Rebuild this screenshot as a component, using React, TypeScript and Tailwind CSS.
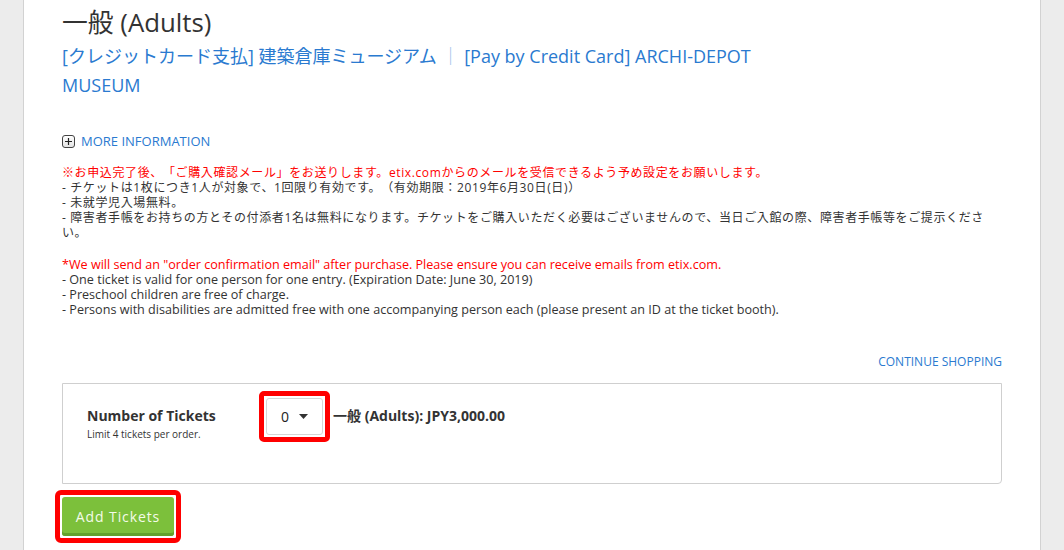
import React from "react";

const font = "font-['Open_Sans','Noto_Sans_CJK_JP',sans-serif]";

function PlusIcon() {
  return (
    <span className="inline-flex h-[13px] w-[13px] items-center justify-center rounded-[3px] border border-[#444] bg-gradient-to-b from-white to-[#e4e4e4]">
      <svg width="9" height="9" viewBox="0 0 9 9">
        <path d="M4.5 1v7M1 4.5h7" stroke="#222" strokeWidth="1.2" />
      </svg>
    </span>
  );
}

export default function App() {
  return (
    <div className={`min-h-[550px] w-[1064px] bg-[#ececec] ${font} [text-spacing-trim:space-all]`}>
      <div className="ml-[23px] min-h-[550px] w-[1018px] border-x border-[#d2d2d2] bg-white px-[38px]">
        <h1 className="pt-[7px] text-[25.8px] leading-[30px] text-[#333]">一般 (Adults)</h1>
        <div className="mt-[5px] w-[730px] text-[18px] leading-[29px] text-[#2a7ad0]">
          [クレジットカード支払] 建築倉庫ミュージアム <span className="text-[#9cc0ea]">｜</span> [Pay by Credit Card] ARCHI-DEPOT MUSEUM
        </div>
        <div className="mt-[33px] flex items-center gap-[6px] text-[13px] leading-[16px] text-[#2a7ad0]">
          <PlusIcon />
          <span>MORE INFORMATION</span>
        </div>
        <div className="mt-[16px] text-[12.6px] leading-[15px] text-[#333]">
          <div className="text-[12px] tracking-[0.62px]">
            <div className="text-[#ff0000]">
              ※お申込完了後、「ご購入確認メール」をお送りします。etix.comからのメールを受信できるよう予め設定をお願いします。
            </div>
            <div>- チケットは1枚につき1人が対象で、1回限り有効です。（有効期限：2019年6月30日(日)）</div>
            <div>- 未就学児入場無料。</div>
            <div>
              - 障害者手帳をお持ちの方とその付添者1名は無料になります。チケットをご購入いただく必要はございませんので、当日ご入館の際、障害者手帳等をご提示くださ
              <br />
              い。
            </div>
          </div>
          <div className="mt-[17px] text-[#ff0000]">
            *We will send an "order confirmation email" after purchase. Please ensure you can receive emails from etix.com.
          </div>
          <div>- One ticket is valid for one person for one entry. (Expiration Date: June 30, 2019)</div>
          <div>- Preschool children are free of charge.</div>
          <div>- Persons with disabilities are admitted free with one accompanying person each (please present an ID at the ticket booth).</div>
        </div>
        <div className="mt-[37px] text-right text-[12px] leading-[16px] text-[#2a7ad0]">CONTINUE SHOPPING</div>
        <div className="mt-[13px] h-[101px] rounded-br-[4px] border border-[#cfcfcf] pl-[24px] pt-[14px]">
          <div className="flex items-start">
            <div className="w-[179px] pt-[9px]">
              <div className="text-[14px] font-bold leading-[18px] text-[#333]">Number of Tickets</div>
              <div className="mt-[2px] text-[10px] leading-[14px] text-[#333]">Limit 4 tickets per order.</div>
            </div>
            <div className="relative">
              <div className="flex h-[37px] w-[57px] items-center justify-center gap-[10px] rounded-[3px] border border-[#d6d6d6] bg-white text-[14px] text-[#222]">
                <span>0</span>
                <svg width="9" height="5" viewBox="0 0 9 5">
                  <path d="M0 0h9L4.5 5z" fill="#333" />
                </svg>
              </div>
              <div className="absolute -inset-[7px] rounded-[5px] border-[5px] border-[#f00]" />
            </div>
            <div className="ml-[10px] pt-[9px] text-[14px] font-bold leading-[18px] text-[#333]">
              一般 (Adults): JPY3,000.00
            </div>
          </div>
        </div>
        <div className="-ml-[7px] mt-[6px] inline-block rounded-[6px] border-[5px] border-[#f00] p-[2px]">
          <button className="block h-[39px] w-[112px] rounded-[3px] bg-[#7cc03b] text-[14px] tracking-[0.9px] text-[#f4fbe9] shadow-[inset_0_-3px_0_#62a22b]">
            Add Tickets
          </button>
        </div>
      </div>
    </div>
  );
}
